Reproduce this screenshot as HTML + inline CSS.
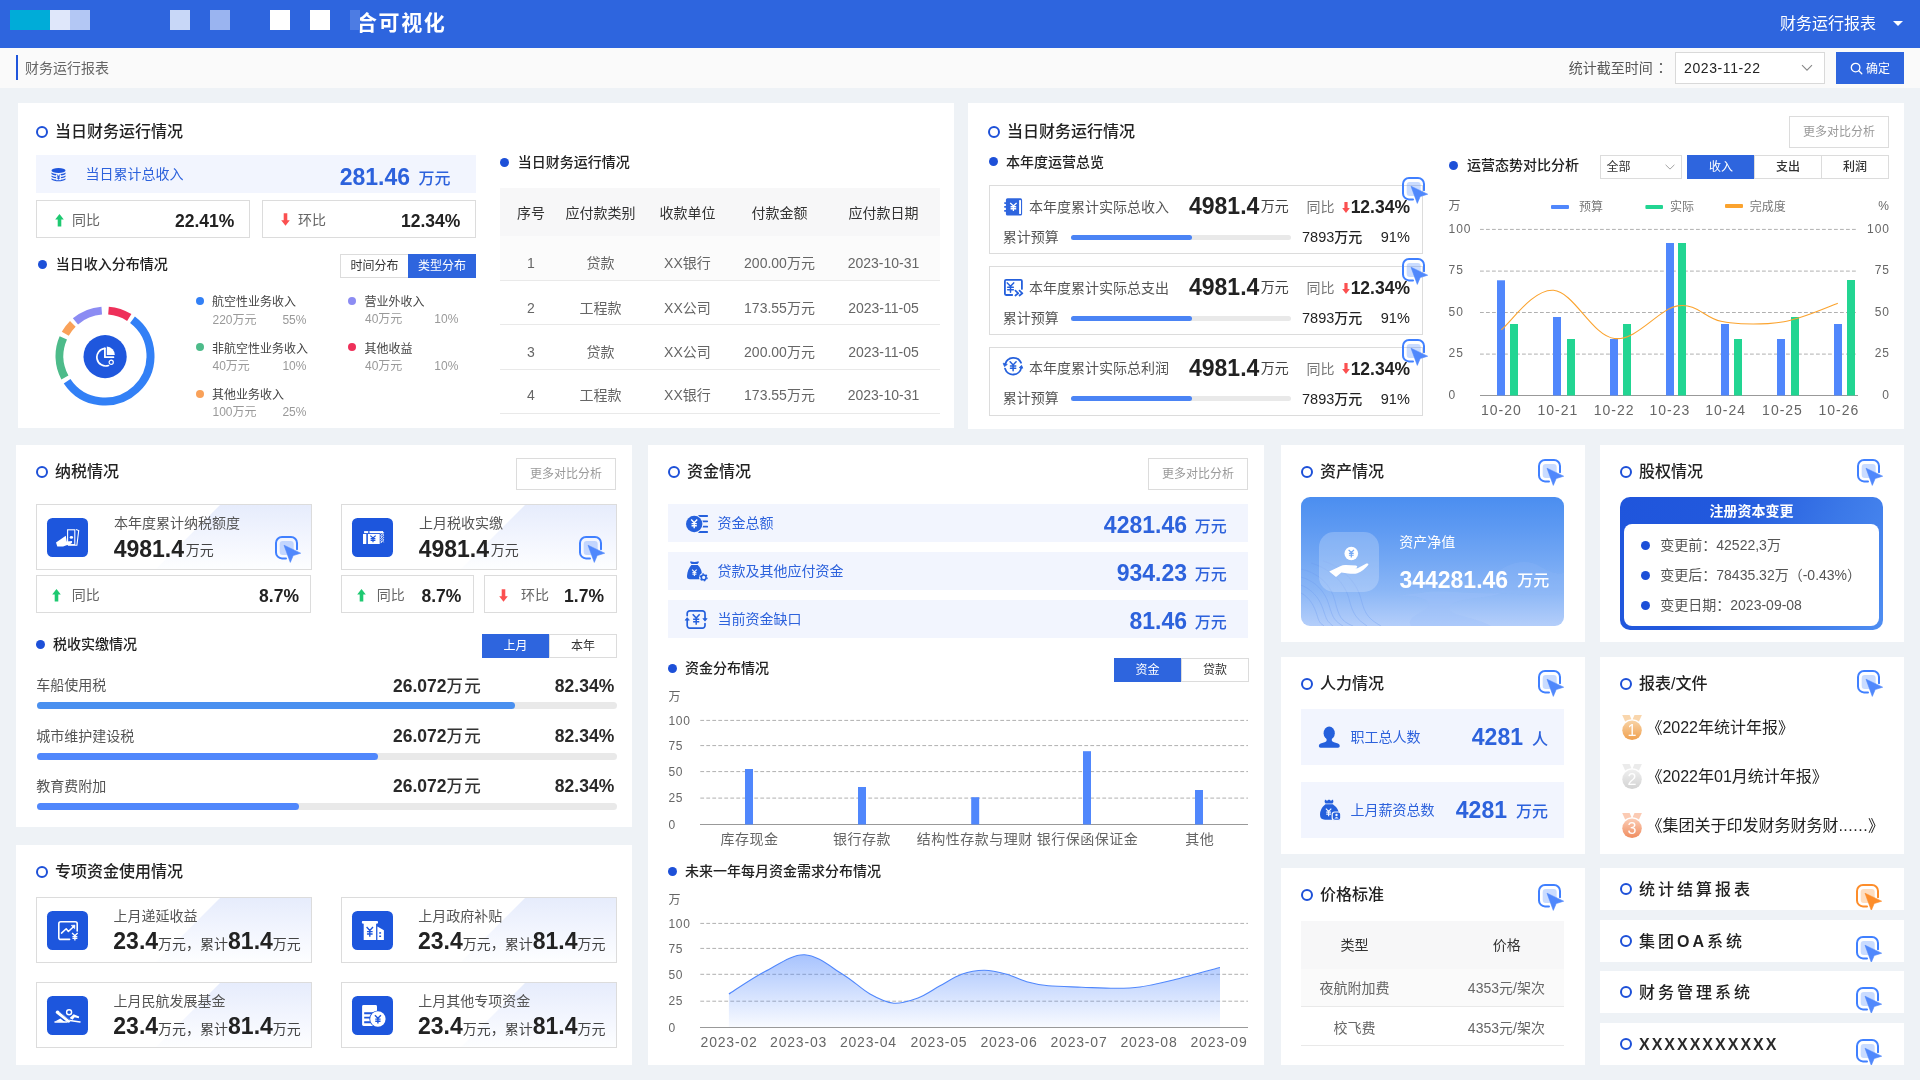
<!DOCTYPE html>
<html lang="zh-CN">
<head>
<meta charset="utf-8">
<title>财务运行报表</title>
<style>
*{box-sizing:border-box;margin:0;padding:0}
html,body{width:1920px;height:1080px;overflow:hidden}
body{background:#eef2f6;font-family:"Liberation Sans","Noto Sans CJK SC",sans-serif;font-size:14px;color:#333;position:relative}
.abs,.p,.t,.n,.box,.band,.dot,.ring,.btn,.seg,.more{position:absolute}
.p{background:#fff;overflow:hidden}
#hd,#sb,.p{will-change:transform}
.t{white-space:nowrap;line-height:20px;height:20px}
.n{white-space:nowrap;font-weight:bold;color:#222;line-height:20px;height:20px}
.ring{width:12px;height:12px;border:2.2px solid #1d50d8;border-radius:50%}
.ttl{font-size:16px;font-weight:500;color:#222;line-height:24px;height:24px}
.dot{width:9px;height:9px;border-radius:50%;background:#1d50d8}
.sub{font-size:14px;font-weight:500;color:#222}
.box{border:1px solid #dcdcdc;background:#fff}
.band{background:#f2f5fe}
.blue{color:#2d62dc}
.g6{color:#666}
.g9{color:#999}
.more{border:1px solid #dcdcdc;color:#999;font-size:12px;text-align:center;background:#fff}
.seg{font-size:12px;text-align:center;border:1px solid #dcdcdc;color:#333;background:#fff}
.seg.on{background:#2e65de;border-color:#2e65de;color:#fff}
.nn{font-size:23px;font-weight:bold;color:#222}
.r{text-align:right}
.c{text-align:center}
svg{position:absolute;overflow:visible}
</style>
</head>
<body>
<!-- header -->
<div class="abs" id="hd" style="left:0;top:0;width:1920px;height:48px;background:#2e65de">
  <div class="abs" style="left:10px;top:10px;width:40px;height:20px;background:#00acd8"></div>
  <div class="abs" style="left:50px;top:10px;width:20px;height:20px;background:#dfe7fa"></div>
  <div class="abs" style="left:70px;top:10px;width:20px;height:20px;background:#b3c7f4"></div>
  <div class="abs" style="left:170px;top:10px;width:20px;height:20px;background:#c8d7f7"></div>
  <div class="abs" style="left:210px;top:10px;width:20px;height:20px;background:#9ab4f0"></div>
  <div class="abs" style="left:270px;top:10px;width:20px;height:20px;background:#fff"></div>
  <div class="abs" style="left:310px;top:10px;width:20px;height:20px;background:#fff"></div>
  <div class="t" style="left:356px;top:10px;font-size:21px;font-weight:bold;color:#fff;line-height:26px;height:26px;letter-spacing:1.6px">合可视化</div>
  <div class="abs" style="left:350px;top:10px;width:10px;height:20px;background:#4d7ce3"></div>
  <div class="t" style="left:1780px;top:13px;font-size:16px;color:#fff;line-height:22px;height:22px">财务运行报表</div>
  <div class="abs" style="left:1893px;top:21px;width:0;height:0;border-left:5px solid transparent;border-right:5px solid transparent;border-top:5px solid #fff"></div>
</div>
<!-- sub bar -->
<div class="abs" id="sb" style="left:0;top:48px;width:1920px;height:40px;background:#fafafa">
  <div class="abs" style="left:16px;top:7px;width:2px;height:25px;background:#1f55dc"></div>
  <div class="t g6" style="left:25px;top:10px;font-size:14px;color:#666">财务运行报表</div>
  <div class="t" style="left:1568.8px;top:10px;font-size:14px;color:#555">统计截至时间<span style="position:relative;left:4.6px;top:-1px">：</span></div>
  <div class="box" style="left:1675px;top:4px;width:150px;height:32px;border-color:#d9d9d9"></div>
  <div class="t" style="left:1684px;top:10px;font-size:14px;color:#222;letter-spacing:0.6px">2023-11-22</div>
  <svg style="left:1801px;top:16px" width="12" height="8" viewBox="0 0 12 8"><path d="M1 1.2 L6 6.2 L11 1.2" fill="none" stroke="#888" stroke-width="1.1"/></svg>
  <div class="abs" style="left:1836px;top:4px;width:68px;height:32px;background:#2e65de"></div>
  <svg style="left:1850px;top:14px" width="13" height="13" viewBox="0 0 13 13"><circle cx="5.6" cy="5.6" r="4.3" fill="none" stroke="#fff" stroke-width="1.3"/><path d="M8.8 8.8 L11.8 11.8" stroke="#fff" stroke-width="1.3" stroke-linecap="round"/></svg>
  <div class="t" style="left:1866px;top:10.5px;font-size:12px;color:#fff">确定</div>
</div>

<!-- PANEL A -->
<div class="p" id="pA" style="left:18px;top:103px;width:936px;height:325px">
  <div class="ring" style="left:18px;top:23px"></div>
  <div class="t ttl" style="left:37px;top:17px">当日财务运行情况</div>
  <div class="band" style="left:18px;top:52px;width:440px;height:37.5px"></div>
  <svg style="left:32.5px;top:64.5px" width="15" height="14" viewBox="0 0 15 14"><ellipse cx="7.5" cy="2.6" rx="7" ry="2.5" fill="#1f55dc"/><path d="M0.5 4.6 C3 6.6 12 6.6 14.5 4.6 V6 C12 8 3 8 0.5 6 Z M0.5 7.4 C3 9.4 12 9.4 14.5 7.4 V8.8 C12 10.8 3 10.8 0.5 8.8 Z M0.5 10.2 C3 12.2 12 12.2 14.5 10.2 V11.4 C12 13.8 3 13.8 0.5 11.4 Z" fill="#1f55dc"/><rect x="5" y="5.8" width="5" height="6.4" fill="#f2f5fe"/><path d="M5.7 6.2 L7.5 8.4 L9.3 6.2 M7.5 8.4 V11.6 M5.9 8.8 H9.1 M5.9 10.2 H9.1" stroke="#1f55dc" stroke-width="0.9" fill="none"/></svg>
  <div class="t blue" style="left:67.4px;top:61px">当日累计总收入</div>
  <div class="n blue r" style="right:544px;top:60px;font-size:23px;line-height:28px;height:28px;color:#2d62dc">281.46</div>
  <div class="t blue" style="left:400.5px;top:65px;font-size:16px;font-weight:500;line-height:22px;height:22px">万元</div>
  <div class="box" style="left:18px;top:97px;width:214px;height:38px"></div>
  <div class="box" style="left:244px;top:97px;width:214px;height:38px"></div>
  <svg style="left:37px;top:110.5px" width="9" height="13" viewBox="0 0 9 13"><path d="M4.5 0 L8.8 5.6 H6.3 V12.6 H2.7 V5.6 H0.2 Z" fill="#1ec971"/></svg>
  <div class="t g6" style="left:54px;top:106.5px">同比</div>
  <div class="n r" style="right:719.6px;top:107.9px;font-size:17.5px">22.41%</div>
  <svg style="left:263px;top:110px" width="9" height="13" viewBox="0 0 9 13"><path d="M4.5 12.8 L8.8 7.2 H6.3 V0.2 H2.7 V7.2 H0.2 Z" fill="#fb5050"/></svg>
  <div class="t g6" style="left:280px;top:106.5px">环比</div>
  <div class="n r" style="right:493.6px;top:107.9px;font-size:17.5px">12.34%</div>
  <div class="dot" style="left:19.5px;top:156.5px"></div>
  <div class="t sub" style="left:37.7px;top:151px">当日收入分布情况</div>
  <div class="seg" style="left:322px;top:151px;width:69px;height:24px;line-height:23.6px">时间分布</div>
  <div class="seg on" style="left:390px;top:151px;width:68px;height:24px;line-height:23.6px">类型分布</div>
  <svg id="donut" style="left:37.25px;top:202.75px" width="100" height="100" viewBox="-50 -50 100 100"><path d="M3.49 -45.37 A45.5 45.5 0 0 1 24.25 -38.50" fill="none" stroke="#ee305a" stroke-width="8"/><path d="M27.51 -36.24 A45.5 45.5 0 1 1 -37.90 25.18" fill="none" stroke="#3280f6" stroke-width="8"/><path d="M-40.10 21.50 A45.5 45.5 0 0 1 -41.69 -18.22" fill="none" stroke="#4dbb8a" stroke-width="8"/><path d="M-39.72 -22.20 A45.5 45.5 0 0 1 -32.17 -32.17" fill="none" stroke="#f9a159" stroke-width="8"/><path d="M-29.55 -34.60 A45.5 45.5 0 0 1 -3.25 -45.38" fill="none" stroke="#8c8cf3" stroke-width="8"/><circle cx="0.1" cy="0.6" r="21.6" fill="#1f57dd"/><g transform="translate(0.1,0.6)"><path d="M-0.2 -8.2 A8.8 8.8 0 1 0 3.4 8.9" fill="none" stroke="#fff" stroke-width="1.7" stroke-linecap="round"/><path d="M-0.2 -8.2 V0.6 H8.3" fill="none" stroke="#fff" stroke-width="1.8" stroke-linecap="round" stroke-linejoin="round"/><path d="M1.7 -1.5 V-10 A8.2 8.2 0 0 1 9.7 -1.5 Z" fill="#fff"/><circle cx="6.1" cy="5.7" r="2.1" fill="#1f57dd" stroke="#fff" stroke-width="1.2"/></g></svg>
  <div class="abs" style="left:178px;top:193.9px;width:8px;height:8px;border-radius:50%;background:#3280f6"></div>
  <div class="t" style="left:194px;top:189.4px;font-size:12px;color:#444">航空性业务收入</div>
  <div class="t g9" style="left:194.5px;top:206.7px;font-size:12px">220万元</div>
  <div class="t g9 r" style="right:647.6px;top:206.7px;font-size:12px">55%</div>
  <div class="abs" style="left:178px;top:240.0px;width:8px;height:8px;border-radius:50%;background:#4dbb8a"></div>
  <div class="t" style="left:194px;top:235.5px;font-size:12px;color:#444">非航空性业务收入</div>
  <div class="t g9" style="left:194.5px;top:253px;font-size:12px">40万元</div>
  <div class="t g9 r" style="right:647.6px;top:253px;font-size:12px">10%</div>
  <div class="abs" style="left:178px;top:286.5px;width:8px;height:8px;border-radius:50%;background:#f9a159"></div>
  <div class="t" style="left:194px;top:282px;font-size:12px;color:#444">其他业务收入</div>
  <div class="t g9" style="left:194.5px;top:298.6px;font-size:12px">100万元</div>
  <div class="t g9 r" style="right:647.6px;top:298.6px;font-size:12px">25%</div>
  <div class="abs" style="left:330px;top:193.6px;width:8px;height:8px;border-radius:50%;background:#8c8cf3"></div>
  <div class="t" style="left:346.5px;top:189.1px;font-size:12px;color:#444">营业外收入</div>
  <div class="t g9" style="left:347.0px;top:206px;font-size:12px">40万元</div>
  <div class="t g9 r" style="right:495.7px;top:206px;font-size:12px">10%</div>
  <div class="abs" style="left:330px;top:240.0px;width:8px;height:8px;border-radius:50%;background:#ee305a"></div>
  <div class="t" style="left:346.5px;top:235.5px;font-size:12px;color:#444">其他收益</div>
  <div class="t g9" style="left:347.0px;top:253px;font-size:12px">40万元</div>
  <div class="t g9 r" style="right:495.7px;top:253px;font-size:12px">10%</div>
  <div class="dot" style="left:481.5px;top:54.5px"></div>
  <div class="t sub" style="left:499.7px;top:49px">当日财务运行情况</div>
  <div class="abs" style="left:482px;top:85px;width:440px;height:48px;background:#f7f7f8"></div>
  <div class="abs" style="left:482px;top:133px;width:440px;height:44px;background:#fbfbfb"></div>
  <div class="t c" style="left:453px;top:99.5px;width:120px;color:#333">序号</div>
  <div class="t c" style="left:522.4px;top:99.5px;width:120px;color:#333">应付款类别</div>
  <div class="t c" style="left:609.4px;top:99.5px;width:120px;color:#333">收款单位</div>
  <div class="t c" style="left:701.5px;top:99.5px;width:120px;color:#333">付款金额</div>
  <div class="t c" style="left:805.5px;top:99.5px;width:120px;color:#333">应付款日期</div>
  <div class="t c g6" style="left:453px;top:149.75px;width:120px">1</div>
  <div class="t c g6" style="left:522.4px;top:149.75px;width:120px">贷款</div>
  <div class="t c g6" style="left:609.4px;top:149.75px;width:120px">XX银行</div>
  <div class="t c g6" style="left:701.5px;top:149.75px;width:120px">200.00万元</div>
  <div class="t c g6" style="left:805.5px;top:149.75px;width:120px">2023-10-31</div>
  <div class="abs" style="left:482px;top:177px;width:440px;height:1px;background:#e9e9e9"></div>
  <div class="t c g6" style="left:453px;top:194.89999999999998px;width:120px">2</div>
  <div class="t c g6" style="left:522.4px;top:194.89999999999998px;width:120px">工程款</div>
  <div class="t c g6" style="left:609.4px;top:194.89999999999998px;width:120px">XX公司</div>
  <div class="t c g6" style="left:701.5px;top:194.89999999999998px;width:120px">173.55万元</div>
  <div class="t c g6" style="left:805.5px;top:194.89999999999998px;width:120px">2023-11-05</div>
  <div class="abs" style="left:482px;top:221px;width:440px;height:1px;background:#e9e9e9"></div>
  <div class="t c g6" style="left:453px;top:238.7px;width:120px">3</div>
  <div class="t c g6" style="left:522.4px;top:238.7px;width:120px">贷款</div>
  <div class="t c g6" style="left:609.4px;top:238.7px;width:120px">XX公司</div>
  <div class="t c g6" style="left:701.5px;top:238.7px;width:120px">200.00万元</div>
  <div class="t c g6" style="left:805.5px;top:238.7px;width:120px">2023-11-05</div>
  <div class="abs" style="left:482px;top:266px;width:440px;height:1px;background:#e9e9e9"></div>
  <div class="t c g6" style="left:453px;top:282.4px;width:120px">4</div>
  <div class="t c g6" style="left:522.4px;top:282.4px;width:120px">工程款</div>
  <div class="t c g6" style="left:609.4px;top:282.4px;width:120px">XX银行</div>
  <div class="t c g6" style="left:701.5px;top:282.4px;width:120px">173.55万元</div>
  <div class="t c g6" style="left:805.5px;top:282.4px;width:120px">2023-10-31</div>
  <div class="abs" style="left:482px;top:310px;width:440px;height:1px;background:#e9e9e9"></div>
</div>

<!-- PANEL B -->
<div class="p" id="pB" style="left:968px;top:103px;width:936px;height:326px">
  <div class="ring" style="left:20px;top:23px"></div>
  <div class="t ttl" style="left:39px;top:17px">当日财务运行情况</div>
  <div class="dot" style="left:20.5px;top:54.4px"></div>
  <div class="t sub" style="left:38px;top:49px">本年度运营总览</div>
  <div class="box" style="left:21px;top:82px;width:434px;height:69px"></div>
  <svg style="left:30px;top:89.0px" width="32" height="30" viewBox="0 0 32 30"><rect x="7.9" y="6.3" width="16.2" height="17.3" rx="1.6" fill="#2f65de"/><rect x="6" y="10.2" width="3" height="1.7" rx="0.8" fill="#2f65de"/><rect x="6" y="14.1" width="3" height="1.7" rx="0.8" fill="#2f65de"/><rect x="6" y="18" width="3" height="1.7" rx="0.8" fill="#2f65de"/><rect x="21.1" y="8" width="1.9" height="14" rx="0.6" fill="#fff"/><path d="M12.20 11.00 L15.40 13.88 L18.60 11.00 M15.40 13.88 V19.00 M12.58 14.76 H18.22 M12.58 16.76 H18.22" fill="none" stroke="#fff" stroke-width="1.3"/></svg>
  <div class="t" style="left:61px;top:94.1px;color:#555">本年度累计实际总收入</div>
  <div class="n" style="left:221.0px;top:89.2px;font-size:23px;line-height:28px;height:28px">4981.4</div>
  <div class="t" style="left:292.8px;top:93.3px;color:#444">万元</div>
  <div class="t" style="left:338.5px;top:94.3px;color:#777">同比</div>
  <svg style="left:374px;top:98.0px" width="8" height="13" viewBox="0 0 9 13"><path d="M4.5 12.8 L8.8 7.2 H6.3 V0.2 H2.7 V7.2 H0.2 Z" fill="#fb5050"/></svg>
  <div class="n r" style="right:494px;top:94.4px;font-size:17.5px">12.34%</div>
  <div class="t" style="left:34.7px;top:124.0px;color:#555">累计预算</div>
  <div class="abs" style="left:103px;top:131.8px;width:220px;height:5px;border-radius:3px;background:#e9e9e9"></div>
  <div class="abs" style="left:103px;top:131.8px;width:121px;height:5px;border-radius:3px;background:#4b84f5"></div>
  <div class="t" style="left:334px;top:124.2px;font-size:14.5px;color:#222">7893<span style="font-size:14px;font-weight:500">万元</span></div>
  <div class="t r" style="right:494.2px;top:124.2px;font-size:14.5px;color:#222">91%</div>
  <svg class="cur" style="left:433px;top:73.4px" width="28" height="29" viewBox="0 0 28 29"><rect x="5.7" y="5.9" width="14" height="14" rx="3" fill="rgba(64,128,255,0.28)"/><path d="M23 14.2 V8 A6 6 0 0 0 17 2 H8 A6 6 0 0 0 2 8 V17.4 A6 6 0 0 0 8 23.4 H12" fill="none" stroke="#4080ff" stroke-width="2" stroke-linecap="round"/><path d="M10 10.2 L26.7 18.2 L19.2 20.6 L16.3 27.4 Z" fill="#5088fc" stroke="#5088fc" stroke-width="0.6" stroke-linejoin="round"/></svg>
  <div class="box" style="left:21px;top:163px;width:434px;height:69px"></div>
  <svg style="left:30px;top:168.9px" width="32" height="30" viewBox="0 0 32 30"><path d="M23.9 16.9 V9 A1.2 1.2 0 0 0 22.7 7.8 H8.1 A1.2 1.2 0 0 0 6.9 9 V21.8 A1.2 1.2 0 0 0 8.1 23 H14.2" fill="none" stroke="#2560dc" stroke-width="1.8" stroke-linecap="round"/><path d="M9.30 10.90 L12.50 14.28 L15.70 10.90 M12.50 14.28 V20.30 M9.68 15.32 H15.32 M9.68 17.67 H15.32" fill="none" stroke="#2560dc" stroke-width="1.5" stroke-linecap="round"/><path d="M17.4 18.6 L20.3 21.3 L17.4 23.5 M21.5 18.6 L24.4 21.3 L21.5 23.5" fill="none" stroke="#2560dc" stroke-width="1.7" stroke-linecap="round" stroke-linejoin="round"/></svg>
  <div class="t" style="left:61px;top:174.9px;color:#555">本年度累计实际总支出</div>
  <div class="n" style="left:221.0px;top:170.0px;font-size:23px;line-height:28px;height:28px">4981.4</div>
  <div class="t" style="left:292.8px;top:174.1px;color:#444">万元</div>
  <div class="t" style="left:338.5px;top:175.1px;color:#777">同比</div>
  <svg style="left:374px;top:178.8px" width="8" height="13" viewBox="0 0 9 13"><path d="M4.5 12.8 L8.8 7.2 H6.3 V0.2 H2.7 V7.2 H0.2 Z" fill="#fb5050"/></svg>
  <div class="n r" style="right:494px;top:175.2px;font-size:17.5px">12.34%</div>
  <div class="t" style="left:34.7px;top:204.8px;color:#555">累计预算</div>
  <div class="abs" style="left:103px;top:212.6px;width:220px;height:5px;border-radius:3px;background:#e9e9e9"></div>
  <div class="abs" style="left:103px;top:212.6px;width:121px;height:5px;border-radius:3px;background:#4b84f5"></div>
  <div class="t" style="left:334px;top:205.0px;font-size:14.5px;color:#222">7893<span style="font-size:14px;font-weight:500">万元</span></div>
  <div class="t r" style="right:494.2px;top:205.0px;font-size:14.5px;color:#222">91%</div>
  <svg class="cur" style="left:433px;top:154.2px" width="28" height="29" viewBox="0 0 28 29"><rect x="5.7" y="5.9" width="14" height="14" rx="3" fill="rgba(64,128,255,0.28)"/><path d="M23 14.2 V8 A6 6 0 0 0 17 2 H8 A6 6 0 0 0 2 8 V17.4 A6 6 0 0 0 8 23.4 H12" fill="none" stroke="#4080ff" stroke-width="2" stroke-linecap="round"/><path d="M10 10.2 L26.7 18.2 L19.2 20.6 L16.3 27.4 Z" fill="#5088fc" stroke="#5088fc" stroke-width="0.6" stroke-linejoin="round"/></svg>
  <div class="box" style="left:21px;top:244px;width:434px;height:69px"></div>
  <svg style="left:30px;top:249.4px" width="32" height="30" viewBox="0 0 32 30"><path d="M7.4 11.6 A8.4 8.4 0 0 1 23 10.7" fill="none" stroke="#2560dc" stroke-width="1.8" stroke-linecap="round"/><path d="M5.2 11.2 L9.3 12.4 L6.5 14.6 Z" fill="#2560dc" stroke="#2560dc" stroke-width="0.8" stroke-linejoin="round"/><path d="M7 16.6 A8.4 8.4 0 0 0 23.3 15.6" fill="none" stroke="#2560dc" stroke-width="1.8" stroke-linecap="round"/><path d="M24.8 16.2 L21.2 15.6 L23.6 13.4 Z" fill="#2560dc" stroke="#2560dc" stroke-width="0.8" stroke-linejoin="round"/><path d="M12.10 9.70 L15.10 12.94 L18.10 9.70 M15.10 12.94 V18.70 M12.46 13.93 H17.74 M12.46 16.18 H17.74" fill="none" stroke="#2560dc" stroke-width="1.5" stroke-linecap="round"/></svg>
  <div class="t" style="left:61px;top:255.4px;color:#555">本年度累计实际总利润</div>
  <div class="n" style="left:221.0px;top:250.5px;font-size:23px;line-height:28px;height:28px">4981.4</div>
  <div class="t" style="left:292.8px;top:254.6px;color:#444">万元</div>
  <div class="t" style="left:338.5px;top:255.6px;color:#777">同比</div>
  <svg style="left:374px;top:259.3px" width="8" height="13" viewBox="0 0 9 13"><path d="M4.5 12.8 L8.8 7.2 H6.3 V0.2 H2.7 V7.2 H0.2 Z" fill="#fb5050"/></svg>
  <div class="n r" style="right:494px;top:255.7px;font-size:17.5px">12.34%</div>
  <div class="t" style="left:34.7px;top:285.3px;color:#555">累计预算</div>
  <div class="abs" style="left:103px;top:293.1px;width:220px;height:5px;border-radius:3px;background:#e9e9e9"></div>
  <div class="abs" style="left:103px;top:293.1px;width:121px;height:5px;border-radius:3px;background:#4b84f5"></div>
  <div class="t" style="left:334px;top:285.5px;font-size:14.5px;color:#222">7893<span style="font-size:14px;font-weight:500">万元</span></div>
  <div class="t r" style="right:494.2px;top:285.5px;font-size:14.5px;color:#222">91%</div>
  <svg class="cur" style="left:433px;top:234.7px" width="28" height="29" viewBox="0 0 28 29"><rect x="5.7" y="5.9" width="14" height="14" rx="3" fill="rgba(64,128,255,0.28)"/><path d="M23 14.2 V8 A6 6 0 0 0 17 2 H8 A6 6 0 0 0 2 8 V17.4 A6 6 0 0 0 8 23.4 H12" fill="none" stroke="#4080ff" stroke-width="2" stroke-linecap="round"/><path d="M10 10.2 L26.7 18.2 L19.2 20.6 L16.3 27.4 Z" fill="#5088fc" stroke="#5088fc" stroke-width="0.6" stroke-linejoin="round"/></svg>
  <div class="more" style="left:821px;top:13px;width:100px;height:32px;line-height:31.6px">更多对比分析</div>
  <div class="dot" style="left:481.4px;top:57.5px"></div>
  <div class="t sub" style="left:498.9px;top:52.4px">运营态势对比分析</div>
  <div class="box" style="left:632px;top:52px;width:82px;height:24px"></div>
  <div class="t" style="left:638.6px;top:54px;font-size:12px;color:#333">全部</div>
  <svg style="left:696.5px;top:60.6px" width="10" height="6" viewBox="0 0 10 6"><path d="M0.6 0.8 L5 5.1 L9.4 0.8" fill="none" stroke="#999" stroke-width="0.9"/></svg>
  <div class="seg on" style="left:719px;top:52px;width:68px;height:24px;line-height:23.6px">收入</div>
  <div class="seg" style="left:786px;top:52px;width:68px;height:24px;line-height:23.6px;font-weight:500">支出</div>
  <div class="seg" style="left:853px;top:52px;width:68px;height:24px;line-height:23.6px;font-weight:500">利润</div>
  <svg style="left:462px;top:87px" width="474" height="239" viewBox="1430 190 474 239"><path d="M1480 229.4 H1856.5" stroke="#b0b0b0" stroke-width="1" stroke-dasharray="3.8 2.2"/><path d="M1480 271.1 H1856.5" stroke="#b0b0b0" stroke-width="1" stroke-dasharray="3.8 2.2"/><path d="M1480 312.5 H1856.5" stroke="#b0b0b0" stroke-width="1" stroke-dasharray="3.8 2.2"/><path d="M1480 354.1 H1856.5" stroke="#b0b0b0" stroke-width="1" stroke-dasharray="3.8 2.2"/><path d="M1480 395.5 H1858" stroke="#999" stroke-width="1"/><rect x="1497" y="280.3" width="8" height="115.2" fill="#5087fc"/><rect x="1510" y="324" width="8" height="71.5" fill="#22d592"/><rect x="1553" y="317" width="8" height="78.5" fill="#5087fc"/><rect x="1567" y="339" width="8" height="56.5" fill="#22d592"/><rect x="1610" y="339" width="8" height="56.5" fill="#5087fc"/><rect x="1623" y="324" width="8" height="71.5" fill="#22d592"/><rect x="1666" y="243" width="8" height="152.5" fill="#5087fc"/><rect x="1678" y="243" width="8" height="152.5" fill="#22d592"/><rect x="1721" y="324" width="8" height="71.5" fill="#5087fc"/><rect x="1734" y="339" width="8" height="56.5" fill="#22d592"/><rect x="1777" y="339" width="8" height="56.5" fill="#5087fc"/><rect x="1791" y="317" width="8" height="78.5" fill="#22d592"/><rect x="1834" y="324" width="8" height="71.5" fill="#5087fc"/><rect x="1847" y="280" width="8" height="115.5" fill="#22d592"/><path d="M1501.25 329.75 C1510.7 322.6 1533.1 288.7 1553.5 290.3 C1573.9 291.9 1592.1 335.7 1614.4 338.5 C1636.7 341.3 1658.4 309.0 1677.6 305.9 C1696.8 302.8 1704.7 318.1 1721 321.3 C1737.3 324.5 1753.8 324.3 1768 323.6 C1782.2 322.9 1787.4 321.2 1800 317.5 C1812.6 313.8 1831.0 305.9 1837.8 303.3" fill="none" stroke="#fba32e" stroke-width="1.1"/><rect x="1551" y="205" width="18" height="4" rx="1" fill="#5087fc"/><rect x="1645.4" y="205" width="17.6" height="4" rx="1" fill="#22d592"/><rect x="1725" y="204" width="18" height="4" rx="1" fill="#fba32e"/><text x="1448.5" y="210.3" style="font-size:12px;fill:#666">万</text><text x="1889" y="210" text-anchor="end" style="font-size:12px;fill:#666">%</text><text x="1448.5" y="232.7" style="font-size:12px;fill:#666;letter-spacing:1px">100</text><text x="1890" y="232.7" text-anchor="end" style="font-size:12px;fill:#666;letter-spacing:1px">100</text><text x="1448.5" y="274.4" style="font-size:12px;fill:#666;letter-spacing:1px">75</text><text x="1890" y="274.4" text-anchor="end" style="font-size:12px;fill:#666;letter-spacing:1px">75</text><text x="1448.5" y="315.8" style="font-size:12px;fill:#666;letter-spacing:1px">50</text><text x="1890" y="315.8" text-anchor="end" style="font-size:12px;fill:#666;letter-spacing:1px">50</text><text x="1448.5" y="357.4" style="font-size:12px;fill:#666;letter-spacing:1px">25</text><text x="1890" y="357.4" text-anchor="end" style="font-size:12px;fill:#666;letter-spacing:1px">25</text><text x="1448.5" y="398.8" style="font-size:12px;fill:#666;letter-spacing:1px">0</text><text x="1890" y="398.8" text-anchor="end" style="font-size:12px;fill:#666;letter-spacing:1px">0</text><text x="1579" y="210.5" style="font-size:12px;fill:#777">预算</text><text x="1670" y="210.5" style="font-size:12px;fill:#777">实际</text><text x="1749.7" y="210.5" style="font-size:12px;fill:#777">完成度</text><text x="1501.4" y="415.3" text-anchor="middle" style="font-size:14px;fill:#666;letter-spacing:1px">10-20</text><text x="1557.9" y="415.3" text-anchor="middle" style="font-size:14px;fill:#666;letter-spacing:1px">10-21</text><text x="1614.1" y="415.3" text-anchor="middle" style="font-size:14px;fill:#666;letter-spacing:1px">10-22</text><text x="1669.9" y="415.3" text-anchor="middle" style="font-size:14px;fill:#666;letter-spacing:1px">10-23</text><text x="1725.6" y="415.3" text-anchor="middle" style="font-size:14px;fill:#666;letter-spacing:1px">10-24</text><text x="1782.5" y="415.3" text-anchor="middle" style="font-size:14px;fill:#666;letter-spacing:1px">10-25</text><text x="1838.8" y="415.3" text-anchor="middle" style="font-size:14px;fill:#666;letter-spacing:1px">10-26</text></svg>
</div>

<!-- PANEL C -->
<div class="p" id="pC" style="left:16px;top:445px;width:616px;height:382px">
  <div class="ring" style="left:20px;top:21px"></div>
  <div class="t ttl" style="left:39px;top:15px">纳税情况</div>
  <div class="more" style="left:500px;top:13px;width:100px;height:32px;line-height:31.6px">更多对比分析</div>
  <div class="box" style="left:20px;top:59px;width:276px;height:66px;overflow:hidden"><div class="abs" style="left:0;top:0;width:100%;height:100%;background:linear-gradient(180deg,#e6ecfc 0%,#f2f5fe 50%,#fdfeff 100%);clip-path:polygon(183px 0,100% 0,100% 100%,119px 100%)"></div></div>
  <div class="box" style="left:325px;top:59px;width:276px;height:66px;overflow:hidden"><div class="abs" style="left:0;top:0;width:100%;height:100%;background:linear-gradient(180deg,#e6ecfc 0%,#f2f5fe 50%,#fdfeff 100%);clip-path:polygon(183px 0,100% 0,100% 100%,119px 100%)"></div></div>
  <svg style="left:31px;top:73px" width="41" height="39" viewBox="0 0 41 39"><rect x="0" y="0" width="41" height="39" rx="5.5" fill="#1d56dd"/><path d="M9 24.4 L18.8 17.8 L19.7 23.6 L25 23.1 Q25.6 24.6 24.4 25.4 L16.1 28.4 H10.3 Z" fill="#fff"/><rect x="20.6" y="11.8" width="7.2" height="14.8" fill="none" stroke="#fff" stroke-width="1.1"/><path d="M29 11.6 L31.7 12.6 L29.9 27.2 H21" fill="none" stroke="#fff" stroke-width="1.1"/><ellipse cx="24.4" cy="19.4" rx="1.7" ry="1.3" fill="#fff"/></svg>
  <svg style="left:336px;top:73px" width="41" height="39" viewBox="0 0 41 39"><rect x="0" y="0" width="41" height="39" rx="5.5" fill="#1d56dd"/><rect x="12.1" y="13.1" width="18.9" height="2" fill="#fff"/><rect x="16.2" y="13.1" width="1.3" height="2" fill="#1d56dd"/><rect x="11" y="16" width="3.3" height="10" fill="#fff"/><rect x="15.9" y="16" width="11.8" height="10" fill="#fff"/><path d="M28.6 15.5 l1.2 1.2 l-1.2 1.2 l1.2 1.2 l-1.2 1.2 l1.2 1.2 l-1.2 1.2 l1.2 1.2 l-1.2 1.2 M30.6 13.5 l1 1.2 l-1 1.2 l1 1.2 l-1 1.2 l1 1.2 l-1 1.2 l1 1.2 l-1 1.2 l1 1.2" fill="none" stroke="#fff" stroke-width="1"/><path d="M18.30 17.60 L21.00 19.98 L23.70 17.60 M21.00 19.98 V24.20 M18.62 20.70 H23.38 M18.62 22.35 H23.38" fill="none" stroke="#1d56dd" stroke-width="1.2"/></svg>
  <div class="t" style="left:98px;top:68.3px;color:#555">本年度累计纳税额度</div>
  <div class="n" style="left:97.7px;top:90.4px;font-size:23px;line-height:28px;height:28px">4981.4</div>
  <div class="t" style="left:169.8px;top:95.2px;color:#444">万元</div>
  <div class="t" style="left:403px;top:68.3px;color:#555">上月税收实缴</div>
  <div class="n" style="left:402.7px;top:90.4px;font-size:23px;line-height:28px;height:28px">4981.4</div>
  <div class="t" style="left:474.8px;top:95.2px;color:#444">万元</div>
  <svg class="cur" style="left:258.2px;top:90.29999999999995px" width="28" height="29" viewBox="0 0 28 29"><rect x="5.7" y="5.9" width="14" height="14" rx="3" fill="rgba(64,128,255,0.28)"/><path d="M23 14.2 V8 A6 6 0 0 0 17 2 H8 A6 6 0 0 0 2 8 V17.4 A6 6 0 0 0 8 23.4 H12" fill="none" stroke="#4080ff" stroke-width="2" stroke-linecap="round"/><path d="M10 10.2 L26.7 18.2 L19.2 20.6 L16.3 27.4 Z" fill="#5088fc" stroke="#5088fc" stroke-width="0.6" stroke-linejoin="round"/></svg>
  <svg class="cur" style="left:562.3px;top:90.29999999999995px" width="28" height="29" viewBox="0 0 28 29"><rect x="5.7" y="5.9" width="14" height="14" rx="3" fill="rgba(64,128,255,0.28)"/><path d="M23 14.2 V8 A6 6 0 0 0 17 2 H8 A6 6 0 0 0 2 8 V17.4 A6 6 0 0 0 8 23.4 H12" fill="none" stroke="#4080ff" stroke-width="2" stroke-linecap="round"/><path d="M10 10.2 L26.7 18.2 L19.2 20.6 L16.3 27.4 Z" fill="#5088fc" stroke="#5088fc" stroke-width="0.6" stroke-linejoin="round"/></svg>
  <div class="box" style="left:20px;top:130px;width:275px;height:38px"></div>
  <div class="box" style="left:325px;top:130px;width:133px;height:38px"></div>
  <div class="box" style="left:468px;top:130px;width:133px;height:38px"></div>
  <svg style="left:35.6px;top:143.5px" width="9" height="13" viewBox="0 0 9 13"><path d="M4.5 0 L8.8 5.6 H6.3 V12.6 H2.7 V5.6 H0.2 Z" fill="#1ec971"/></svg>
  <div class="t g6" style="left:55.8px;top:139.7px">同比</div>
  <div class="n r" style="right:333px;top:141.0px;font-size:17.5px">8.7%</div>
  <svg style="left:340.6px;top:143.5px" width="9" height="13" viewBox="0 0 9 13"><path d="M4.5 0 L8.8 5.6 H6.3 V12.6 H2.7 V5.6 H0.2 Z" fill="#1ec971"/></svg>
  <div class="t g6" style="left:360.8px;top:139.7px">同比</div>
  <div class="n r" style="right:170.7px;top:141.0px;font-size:17.5px">8.7%</div>
  <svg style="left:483.4px;top:144px" width="9" height="13" viewBox="0 0 9 13"><path d="M4.5 12.8 L8.8 7.2 H6.3 V0.2 H2.7 V7.2 H0.2 Z" fill="#fb5050"/></svg>
  <div class="t g6" style="left:505px;top:139.7px">环比</div>
  <div class="n r" style="right:28px;top:141.0px;font-size:17.5px">1.7%</div>
  <div class="dot" style="left:19.5px;top:194.5px"></div>
  <div class="t sub" style="left:37px;top:189px">税收实缴情况</div>
  <div class="seg on" style="left:466px;top:189px;width:67px;height:24px;line-height:23.6px">上月</div>
  <div class="seg" style="left:533px;top:189px;width:68px;height:24px;line-height:23.6px">本年</div>
  <div class="t" style="left:20.3px;top:230.3px;color:#555">车船使用税</div>
  <div class="n" style="left:377px;top:230.6px;font-size:17.5px;color:#2a2a2a">26.072<span style="font-size:16.5px;font-weight:500;letter-spacing:1.2px;color:#333">万元</span></div>
  <div class="n r" style="right:17.8px;top:230.6px;font-size:17.5px;color:#2a2a2a">82.34%</div>
  <div class="abs" style="left:21px;top:257.0px;width:580px;height:7px;border-radius:4px;background:#e9e9e9"></div>
  <div class="abs" style="left:21px;top:257.0px;width:478px;height:7px;border-radius:4px;background:#4a90f0"></div>
  <div class="t" style="left:20.3px;top:281.4px;color:#555">城市维护建设税</div>
  <div class="n" style="left:377px;top:280.7px;font-size:17.5px;color:#2a2a2a">26.072<span style="font-size:16.5px;font-weight:500;letter-spacing:1.2px;color:#333">万元</span></div>
  <div class="n r" style="right:17.8px;top:280.7px;font-size:17.5px;color:#2a2a2a">82.34%</div>
  <div class="abs" style="left:21px;top:308.1px;width:580px;height:7px;border-radius:4px;background:#e9e9e9"></div>
  <div class="abs" style="left:21px;top:308.1px;width:341px;height:7px;border-radius:4px;background:#5087fc"></div>
  <div class="t" style="left:20.3px;top:331.3px;color:#555">教育费附加</div>
  <div class="n" style="left:377px;top:331.2px;font-size:17.5px;color:#2a2a2a">26.072<span style="font-size:16.5px;font-weight:500;letter-spacing:1.2px;color:#333">万元</span></div>
  <div class="n r" style="right:17.8px;top:331.2px;font-size:17.5px;color:#2a2a2a">82.34%</div>
  <div class="abs" style="left:21px;top:358.0px;width:580px;height:7px;border-radius:4px;background:#e9e9e9"></div>
  <div class="abs" style="left:21px;top:358.0px;width:262px;height:7px;border-radius:4px;background:#5087fc"></div>
</div>

<!-- PANEL D -->
<div class="p" id="pD" style="left:648px;top:445px;width:616px;height:620px">
  <div class="ring" style="left:20px;top:21px"></div>
  <div class="t ttl" style="left:39px;top:15px">资金情况</div>
  <div class="more" style="left:500px;top:13px;width:100px;height:32px;line-height:31.6px">更多对比分析</div>
  <div class="band" style="left:20px;top:59px;width:580px;height:38px"></div>
  <div class="t blue" style="left:69.4px;top:68.3px">资金总额</div>
  <div class="n r" style="right:77px;top:66.4px;font-size:23px;line-height:28px;height:28px;color:#2d62dc">4281.46</div>
  <div class="t blue" style="left:546.8px;top:71.2px;font-size:16px;font-weight:500;line-height:22px;height:22px">万元</div>
  <div class="band" style="left:20px;top:107px;width:580px;height:38px"></div>
  <div class="t blue" style="left:69.4px;top:116.3px">贷款及其他应付资金</div>
  <div class="n r" style="right:77px;top:114.4px;font-size:23px;line-height:28px;height:28px;color:#2d62dc">934.23</div>
  <div class="t blue" style="left:546.8px;top:119.2px;font-size:16px;font-weight:500;line-height:22px;height:22px">万元</div>
  <div class="band" style="left:20px;top:155px;width:580px;height:38px"></div>
  <div class="t blue" style="left:69.4px;top:164.3px">当前资金缺口</div>
  <div class="n r" style="right:77px;top:162.4px;font-size:23px;line-height:28px;height:28px;color:#2d62dc">81.46</div>
  <div class="t blue" style="left:546.8px;top:167.2px;font-size:16px;font-weight:500;line-height:22px;height:22px">万元</div>
  <svg style="left:32px;top:61px" width="36" height="130" viewBox="680 506 36 130"><path d="M699 516 H707.2 M699 521.3 H707.2 M699 526.7 H707.2 M699 532 H707.2" stroke="#2560dc" stroke-width="1.8" stroke-linecap="round"/><circle cx="694.2" cy="524" r="9.2" fill="#f2f5fe"/><circle cx="694.2" cy="524" r="8.2" fill="#2560dc"/><path d="M691.20 519.60 L694.20 522.70 L697.20 519.60 M694.20 522.70 V528.20 M691.56 523.64 H696.84 M691.56 525.79 H696.84" fill="none" stroke="#fff" stroke-width="1.4"/><path d="M690.4 561.2 Q694.5 562.6 698.6 561.2 Q699.4 562.8 697.4 564 H691.6 Q689.6 562.8 690.4 561.2 Z" fill="#2560dc"/><path d="M691.4 565 H697.8 Q702 569 702 575.5 Q702 579.2 699 579.2 H690 Q686.8 579.2 687 576 Q687.6 569 691.4 565 Z" fill="#2560dc"/><path d="M692.10 569.60 L694.40 571.90 L696.70 569.60 M694.40 571.90 V576.00 M692.38 572.61 H696.42 M692.38 574.21 H696.42" fill="none" stroke="#f2f5fe" stroke-width="1.1"/><circle cx="703.7" cy="577.4" r="4.6" fill="#f2f5fe"/><circle cx="703.7" cy="577.4" r="2.4" fill="none" stroke="#2560dc" stroke-width="1.6"/><circle cx="703.7" cy="577.4" r="3.4" fill="none" stroke="#2560dc" stroke-width="1.4" stroke-dasharray="1.5 2.06"/><path d="M687.2 615.6 V613.4 A2.6 2.6 0 0 1 689.8 610.8 H702.4 A2.6 2.6 0 0 1 705 613.4 V619.6" fill="none" stroke="#2560dc" stroke-width="1.7" stroke-linecap="round"/><path d="M705 623.6 V625.6 A2.6 2.6 0 0 1 702.4 628.2 H689.8 A2.6 2.6 0 0 1 687.2 625.6 V619" fill="none" stroke="#2560dc" stroke-width="1.7" stroke-linecap="round"/><path d="M702.8 618.6 L705 621.2 L707.2 618.6 Z M685 620.2 L687.2 617.6 L689.4 620.2 Z" fill="#2560dc" stroke="#2560dc" stroke-width="0.6" stroke-linejoin="round"/><path d="M692.70 614.20 L696.20 618.02 L699.70 614.20 M696.20 618.02 V624.80 M693.12 619.18 H699.28 M693.12 621.83 H699.28" fill="none" stroke="#2560dc" stroke-width="1.5"/></svg>
  <div class="dot" style="left:19.6px;top:218.7px"></div>
  <div class="t sub" style="left:37px;top:213.3px">资金分布情况</div>
  <div class="seg on" style="left:466px;top:213px;width:67px;height:24px;line-height:23.6px">资金</div>
  <div class="seg" style="left:533px;top:213px;width:68px;height:24px;line-height:23.6px">贷款</div>
  <div class="dot" style="left:19.6px;top:421.6px"></div>
  <div class="t sub" style="left:37px;top:416.3px">未来一年每月资金需求分布情况</div>
  <svg style="left:12px;top:241px" width="600" height="376" viewBox="660 686 600 376"><defs><linearGradient id="ag" x1="0" y1="0" x2="0" y2="1"><stop offset="0" stop-color="#5087fc" stop-opacity="0.5"/><stop offset="1" stop-color="#5087fc" stop-opacity="0.04"/></linearGradient></defs><path d="M700.3 720.4 H1248" stroke="#b0b0b0" stroke-width="1" stroke-dasharray="3.8 2.2"/><path d="M700.3 745.6 H1248" stroke="#b0b0b0" stroke-width="1" stroke-dasharray="3.8 2.2"/><path d="M700.3 771.6 H1248" stroke="#b0b0b0" stroke-width="1" stroke-dasharray="3.8 2.2"/><path d="M700.3 798.1 H1248" stroke="#b0b0b0" stroke-width="1" stroke-dasharray="3.8 2.2"/><path d="M700 824.5 H1248" stroke="#999" stroke-width="1"/><text x="668.4" y="701.2" style="font-size:12px;fill:#666">万</text><text x="668.4" y="724.6" style="font-size:12px;fill:#666;letter-spacing:0.8px">100</text><text x="668.4" y="749.8" style="font-size:12px;fill:#666;letter-spacing:0.8px">75</text><text x="668.4" y="775.8" style="font-size:12px;fill:#666;letter-spacing:0.8px">50</text><text x="668.4" y="802.3" style="font-size:12px;fill:#666;letter-spacing:0.8px">25</text><text x="668.4" y="828.7" style="font-size:12px;fill:#666;letter-spacing:0.8px">0</text><rect x="745" y="769" width="8" height="55.5" fill="#5087fc"/><rect x="858" y="787" width="8" height="37.5" fill="#5087fc"/><rect x="971.2" y="797.2" width="8" height="27.3" fill="#5087fc"/><rect x="1083" y="751.2" width="8" height="73.3" fill="#5087fc"/><rect x="1195" y="790" width="8" height="34.5" fill="#5087fc"/><text x="749.5" y="843.8" text-anchor="middle" style="font-size:14px;fill:#666;letter-spacing:0.5px">库存现金</text><text x="862.0" y="843.8" text-anchor="middle" style="font-size:14px;fill:#666;letter-spacing:0.5px">银行存款</text><text x="974.8" y="843.8" text-anchor="middle" style="font-size:14px;fill:#666;letter-spacing:0.5px">结构性存款与理财</text><text x="1087.6" y="843.8" text-anchor="middle" style="font-size:14px;fill:#666;letter-spacing:0.5px">银行保函保证金</text><text x="1199.7" y="843.8" text-anchor="middle" style="font-size:14px;fill:#666;letter-spacing:0.5px">其他</text><path d="M700.3 923.4 H1248" stroke="#b0b0b0" stroke-width="1" stroke-dasharray="3.8 2.2"/><path d="M700.3 948.4 H1248" stroke="#b0b0b0" stroke-width="1" stroke-dasharray="3.8 2.2"/><path d="M700.3 974.3 H1248" stroke="#b0b0b0" stroke-width="1" stroke-dasharray="3.8 2.2"/><path d="M700.3 1001.2 H1248" stroke="#b0b0b0" stroke-width="1" stroke-dasharray="3.8 2.2"/><text x="668.4" y="904.2" style="font-size:12px;fill:#666">万</text><text x="668.4" y="927.6" style="font-size:12px;fill:#666;letter-spacing:0.8px">100</text><text x="668.4" y="952.6" style="font-size:12px;fill:#666;letter-spacing:0.8px">75</text><text x="668.4" y="978.5" style="font-size:12px;fill:#666;letter-spacing:0.8px">50</text><text x="668.4" y="1005.4" style="font-size:12px;fill:#666;letter-spacing:0.8px">25</text><text x="668.4" y="1031.7" style="font-size:12px;fill:#666;letter-spacing:0.8px">0</text><path d="M728.9 994 C734.9 990.2 752.4 978.0 765 971.5 C777.6 965.0 791.7 954.2 804.6 954.7 C817.5 955.2 831.7 967.7 842.6 974.2 C853.5 980.8 861.5 989.2 870 994 C878.5 998.8 885.8 1002.5 893.8 1003.2 C901.8 1003.9 910.3 1000.9 918 998 C925.7 995.1 932.7 989.8 940 985.8 C947.3 981.8 954.3 976.8 961.7 974.2 C969.1 971.6 976.7 970.3 984.2 970.3 C991.7 970.3 999.6 972.3 1006.7 974.2 C1013.8 976.1 1019.8 979.8 1026.7 981.7 C1033.6 983.6 1039.1 984.9 1048.3 985.8 C1057.5 986.7 1070.6 986.8 1081.7 987.2 C1092.8 987.6 1105.3 988.3 1115 988.3 C1124.7 988.3 1130.3 988.4 1140 987 C1149.7 985.6 1160.0 983.2 1173.3 980 C1186.6 976.8 1212.2 969.6 1220 967.5 V1027 H728.9 Z" fill="url(#ag)"/><path d="M728.9 994 C734.9 990.2 752.4 978.0 765 971.5 C777.6 965.0 791.7 954.2 804.6 954.7 C817.5 955.2 831.7 967.7 842.6 974.2 C853.5 980.8 861.5 989.2 870 994 C878.5 998.8 885.8 1002.5 893.8 1003.2 C901.8 1003.9 910.3 1000.9 918 998 C925.7 995.1 932.7 989.8 940 985.8 C947.3 981.8 954.3 976.8 961.7 974.2 C969.1 971.6 976.7 970.3 984.2 970.3 C991.7 970.3 999.6 972.3 1006.7 974.2 C1013.8 976.1 1019.8 979.8 1026.7 981.7 C1033.6 983.6 1039.1 984.9 1048.3 985.8 C1057.5 986.7 1070.6 986.8 1081.7 987.2 C1092.8 987.6 1105.3 988.3 1115 988.3 C1124.7 988.3 1130.3 988.4 1140 987 C1149.7 985.6 1160.0 983.2 1173.3 980 C1186.6 976.8 1212.2 969.6 1220 967.5" fill="none" stroke="#5087fc" stroke-width="1.1"/><path d="M700 1027.5 H1248" stroke="#999" stroke-width="1"/><text x="729.1" y="1047" text-anchor="middle" style="font-size:14px;fill:#666;letter-spacing:0.8px">2023-02</text><text x="798.6" y="1047" text-anchor="middle" style="font-size:14px;fill:#666;letter-spacing:0.8px">2023-03</text><text x="868.4" y="1047" text-anchor="middle" style="font-size:14px;fill:#666;letter-spacing:0.8px">2023-04</text><text x="938.9" y="1047" text-anchor="middle" style="font-size:14px;fill:#666;letter-spacing:0.8px">2023-05</text><text x="1009.0" y="1047" text-anchor="middle" style="font-size:14px;fill:#666;letter-spacing:0.8px">2023-06</text><text x="1079.0" y="1047" text-anchor="middle" style="font-size:14px;fill:#666;letter-spacing:0.8px">2023-07</text><text x="1149.0" y="1047" text-anchor="middle" style="font-size:14px;fill:#666;letter-spacing:0.8px">2023-08</text><text x="1219.0" y="1047" text-anchor="middle" style="font-size:14px;fill:#666;letter-spacing:0.8px">2023-09</text></svg>
</div>

<!-- PANEL E -->
<div class="p" id="pE" style="left:1281px;top:445px;width:304px;height:197px">
  <div class="ring" style="left:20px;top:21px"></div>
  <div class="t ttl" style="left:39px;top:15px">资产情况</div>
  <svg class="cur" style="left:256px;top:12.8px" width="28" height="29" viewBox="0 0 28 29"><rect x="5.7" y="5.9" width="14" height="14" rx="3" fill="rgba(64,128,255,0.28)"/><path d="M23 14.2 V8 A6 6 0 0 0 17 2 H8 A6 6 0 0 0 2 8 V17.4 A6 6 0 0 0 8 23.4 H12" fill="none" stroke="#4080ff" stroke-width="2" stroke-linecap="round"/><path d="M10 10.2 L26.7 18.2 L19.2 20.6 L16.3 27.4 Z" fill="#5088fc" stroke="#5088fc" stroke-width="0.6" stroke-linejoin="round"/></svg>
  <div class="abs" style="left:20px;top:52px;width:263px;height:129px;border-radius:9px;overflow:hidden;background:linear-gradient(180deg,#4b8ef0 0%,#5e9af2 25%,#74a8f4 50%,#8ab6f6 72%,#b4cefa 100%)"><svg style="left:0;top:0" width="263" height="129" viewBox="0 0 263 129"><g fill="none" stroke="#6c9cf0" stroke-opacity="0.35" stroke-width="1"><path d="M0 72 C18 76 30 88 34 104 S40 124 52 129"/><path d="M0 80 C14 84 24 94 28 108 S34 124 42 129"/><path d="M0 88 C10 92 18 100 22 112 S26 124 32 129"/><path d="M0 96 C8 100 13 108 16 118 S20 126 23 129"/><path d="M10 66 C30 72 44 86 48 102 S56 122 66 129"/><path d="M22 64 C42 70 56 86 60 102 S68 122 80 129"/></g><path d="M82 104 C100 94 130 100 128 108 C126 116 104 118 110 129 L190 129 C170 118 140 118 150 108 C158 100 186 102 200 96 C170 98 140 92 120 96 C100 98 90 100 82 104 Z" fill="#9dc0f8" fill-opacity="0.35"/><path d="M190 80 C205 66 225 60 240 70 C250 76 258 78 263 76 V96 C240 100 215 96 190 96 Z" fill="#8fb6f6" fill-opacity="0.25"/></svg></div>
  <div class="abs" style="left:38.2px;top:87.3px;width:60px;height:59.5px;border-radius:15px;background:rgba(255,255,255,0.22)"></div>
  <svg style="left:38px;top:87px" width="60" height="60" viewBox="1319 532 60 60"><circle cx="1351.3" cy="553.5" r="6.8" fill="#fff"/><path d="M1348.60 549.80 L1351.30 552.54 L1354.00 549.80 M1351.30 552.54 V557.40 M1348.92 553.37 H1353.68 M1348.92 555.27 H1353.68" fill="none" stroke="#74a8f4" stroke-width="1.2"/><path d="M1329.2 571.5 L1340.2 566.2 Q1343 564.8 1346 565 L1356 565.6 Q1358 566 1357 567.6 Q1356.4 568.4 1354.6 568.4 L1349 568.6 L1357.6 568.2 L1366.4 563.6 Q1368.6 563 1368.4 564.8 Q1364 570.6 1357.4 573.2 Q1354 574.2 1348 573.4 L1341.4 572.6 L1336 577 Z" fill="#fff"/></svg>
  <div class="t" style="left:118.2px;top:87.3px;color:#fff">资产净值</div>
  <div class="n" style="left:118.4px;top:120.8px;font-size:23px;line-height:28px;height:28px;color:#fff">344281.46</div>
  <div class="t" style="left:236.2px;top:124.8px;font-size:16px;font-weight:500;line-height:22px;height:22px;color:#fff">万元</div>
</div>

<!-- PANEL F -->
<div class="p" id="pF" style="left:1600px;top:445px;width:304px;height:197px">
  <div class="ring" style="left:20px;top:21px"></div>
  <div class="t ttl" style="left:39px;top:15px">股权情况</div>
  <svg class="cur" style="left:256px;top:12.8px" width="28" height="29" viewBox="0 0 28 29"><rect x="5.7" y="5.9" width="14" height="14" rx="3" fill="rgba(64,128,255,0.28)"/><path d="M23 14.2 V8 A6 6 0 0 0 17 2 H8 A6 6 0 0 0 2 8 V17.4 A6 6 0 0 0 8 23.4 H12" fill="none" stroke="#4080ff" stroke-width="2" stroke-linecap="round"/><path d="M10 10.2 L26.7 18.2 L19.2 20.6 L16.3 27.4 Z" fill="#5088fc" stroke="#5088fc" stroke-width="0.6" stroke-linejoin="round"/></svg>
  <div class="abs" style="left:20px;top:52px;width:263px;height:133px;border-radius:10px;background:linear-gradient(115deg,#1f55dc 0%,#2259dd 35%,#3b78e8 70%,#4f8ef2 100%)"></div>
  <div class="abs" style="left:24px;top:78.5px;width:255.3px;height:102.5px;border-radius:8px;background:#fff"></div>
  <div class="t c" style="left:20px;width:263px;top:56.3px;color:#fff;font-weight:bold">注册资本变更</div>
  <div class="dot" style="left:40.5px;top:95.7px"></div>
  <div class="t" style="left:60.3px;top:90.4px;color:#555">变更前：42522,3万</div>
  <div class="dot" style="left:40.5px;top:125.7px"></div>
  <div class="t" style="left:60.3px;top:120.4px;color:#555">变更后：78435.32万（-0.43%）</div>
  <div class="dot" style="left:40.5px;top:155.7px"></div>
  <div class="t" style="left:60.3px;top:150.4px;color:#555">变更日期：2023-09-08</div>
</div>

<!-- PANEL G -->
<div class="p" id="pG" style="left:16px;top:845px;width:616px;height:220px">
  <div class="ring" style="left:20px;top:21px"></div>
  <div class="t ttl" style="left:39px;top:15px">专项资金使用情况</div>
  <div class="box" style="left:20px;top:52px;width:276px;height:66px;overflow:hidden"><div class="abs" style="left:0;top:0;width:100%;height:100%;background:linear-gradient(180deg,#e6ecfc 0%,#f2f5fe 50%,#fdfeff 100%);clip-path:polygon(183px 0,100% 0,100% 100%,119px 100%)"></div></div>
  <svg style="left:31px;top:66px" width="41" height="39" viewBox="0 0 41 39"><rect x="0" y="0" width="41" height="39" rx="5.5" fill="#1d56dd"/><path d="M30.2 19.9 V12.7 A2 2 0 0 0 28.2 10.7 H13.8 A2 2 0 0 0 11.8 12.7 V26.4 A2 2 0 0 0 13.8 28.4 H22.6" fill="none" stroke="#fff" stroke-width="1.6" stroke-linecap="round"/><path d="M14.5 22.1 L19.2 17.8 L21.4 20.5 L27 15.2" fill="none" stroke="#fff" stroke-width="1.5" stroke-linecap="round" stroke-linejoin="round"/><path d="M24.2 14.4 L27.9 14.1 L27.7 17.8 Z" fill="#fff" stroke="#fff" stroke-width="0.6" stroke-linejoin="round"/><path d="M25.10 22.00 L27.90 24.74 L30.70 22.00 M27.90 24.74 V29.60 M25.44 25.57 H30.36 M25.44 27.47 H30.36" fill="none" stroke="#fff" stroke-width="1.3"/></svg>
  <div class="t" style="left:97.5px;top:61.3px;color:#555">上月递延收益</div>
  <div class="t" style="left:97.3px;top:82.2px;line-height:28px;height:28px;color:#444"><span class="nn">23.4</span>万元，累计<span class="nn">81.4</span>万元</div>
  <div class="box" style="left:325px;top:52px;width:276px;height:66px;overflow:hidden"><div class="abs" style="left:0;top:0;width:100%;height:100%;background:linear-gradient(180deg,#e6ecfc 0%,#f2f5fe 50%,#fdfeff 100%);clip-path:polygon(183px 0,100% 0,100% 100%,119px 100%)"></div></div>
  <svg style="left:336px;top:66px" width="41" height="39" viewBox="0 0 41 39"><rect x="0" y="0" width="41" height="39" rx="5.5" fill="#1d56dd"/><path d="M10.6 10.1 H25.2 Q26 10.1 26 11 V12 Q26 12.8 24.1 12.8 V29 H11.7 V12.8 Q9.9 12.8 9.9 12 V11 Q9.9 10.1 10.6 10.1 Z" fill="#fff"/><path d="M14.60 16.10 L17.80 19.56 L21.00 16.10 M17.80 19.56 V25.70 M14.98 20.61 H20.62 M14.98 23.01 H20.62" fill="none" stroke="#1d56dd" stroke-width="1.4"/><path d="M25.4 15.4 L31.9 19.2 V29 H25.4 Z" fill="#fff"/><rect x="27.2" y="21.2" width="1.9" height="1.5" fill="#1d56dd"/><rect x="27.2" y="24.5" width="1.9" height="1.5" fill="#1d56dd"/></svg>
  <div class="t" style="left:402.2px;top:61.3px;color:#555">上月政府补贴</div>
  <div class="t" style="left:402.0px;top:82.2px;line-height:28px;height:28px;color:#444"><span class="nn">23.4</span>万元，累计<span class="nn">81.4</span>万元</div>
  <div class="box" style="left:20px;top:137px;width:276px;height:66px;overflow:hidden"><div class="abs" style="left:0;top:0;width:100%;height:100%;background:linear-gradient(180deg,#e6ecfc 0%,#f2f5fe 50%,#fdfeff 100%);clip-path:polygon(183px 0,100% 0,100% 100%,119px 100%)"></div></div>
  <svg style="left:31px;top:151px" width="41" height="39" viewBox="0 0 41 39"><rect x="0" y="0" width="41" height="39" rx="5.5" fill="#1d56dd"/><path d="M10.4 16.2 L21.6 25" fill="none" stroke="#fff" stroke-width="3.4" stroke-linecap="round"/><path d="M12 15.4 L23 24.6" fill="none" stroke="#1d56dd" stroke-width="0.7"/><circle cx="22.1" cy="16.3" r="2.5" fill="#1d56dd" stroke="#fff" stroke-width="1.4"/><path d="M22.6 21.9 L26.6 18.2 L32.2 20.6 L31.8 22.2 L27.6 21.2 L25.6 23.8 Z" fill="#fff"/><path d="M8 25.6 L13.4 22.6 L18 26.2 Z" fill="#fff"/><path d="M8 25.9 H20 M23 24.6 L33 26" fill="none" stroke="#fff" stroke-width="1.5" stroke-linecap="round"/></svg>
  <div class="t" style="left:97.5px;top:146.3px;color:#555">上月民航发展基金</div>
  <div class="t" style="left:97.3px;top:167.2px;line-height:28px;height:28px;color:#444"><span class="nn">23.4</span>万元，累计<span class="nn">81.4</span>万元</div>
  <div class="box" style="left:325px;top:137px;width:276px;height:66px;overflow:hidden"><div class="abs" style="left:0;top:0;width:100%;height:100%;background:linear-gradient(180deg,#e6ecfc 0%,#f2f5fe 50%,#fdfeff 100%);clip-path:polygon(183px 0,100% 0,100% 100%,119px 100%)"></div></div>
  <svg style="left:336px;top:151px" width="41" height="39" viewBox="0 0 41 39"><rect x="0" y="0" width="41" height="39" rx="5.5" fill="#1d56dd"/><rect x="10.1" y="9" width="14.9" height="20.9" rx="1.4" fill="#fff"/><path d="M12.2 17.2 H21 M12.2 21.6 H19 M12.2 26.2 H20" stroke="#1d56dd" stroke-width="1.9"/><circle cx="25.9" cy="23" r="8.6" fill="#1d56dd"/><circle cx="25.9" cy="23" r="7.7" fill="#fff"/><path d="M22.90 19.20 L25.90 22.22 L28.90 19.20 M25.90 22.22 V27.60 M23.26 23.15 H28.54 M23.26 25.25 H28.54" fill="none" stroke="#1d56dd" stroke-width="1.4"/></svg>
  <div class="t" style="left:402.2px;top:146.3px;color:#555">上月其他专项资金</div>
  <div class="t" style="left:402.0px;top:167.2px;line-height:28px;height:28px;color:#444"><span class="nn">23.4</span>万元，累计<span class="nn">81.4</span>万元</div>
</div>

<!-- PANEL H -->
<div class="p" id="pH" style="left:1281px;top:657px;width:304px;height:197px">
  <div class="ring" style="left:20px;top:21px"></div>
  <div class="t ttl" style="left:39px;top:15px">人力情况</div>
  <svg class="cur" style="left:256px;top:11.9px" width="28" height="29" viewBox="0 0 28 29"><rect x="5.7" y="5.9" width="14" height="14" rx="3" fill="rgba(64,128,255,0.28)"/><path d="M23 14.2 V8 A6 6 0 0 0 17 2 H8 A6 6 0 0 0 2 8 V17.4 A6 6 0 0 0 8 23.4 H12" fill="none" stroke="#4080ff" stroke-width="2" stroke-linecap="round"/><path d="M10 10.2 L26.7 18.2 L19.2 20.6 L16.3 27.4 Z" fill="#5088fc" stroke="#5088fc" stroke-width="0.6" stroke-linejoin="round"/></svg>
  <div class="band" style="left:20px;top:52px;width:263px;height:55.7px"></div>
  <div class="band" style="left:20px;top:125px;width:263px;height:55.8px"></div>
  <svg style="left:35px;top:67px" width="28" height="100" viewBox="1316 724 28 100"><ellipse cx="1329.2" cy="733.2" rx="5.6" ry="6.6" fill="#2560dc"/><path d="M1326.6 738 H1331.8 V740.6 Q1332 741.6 1334 742.2 L1338 743.6 Q1339.8 744.4 1339.8 746 Q1339.8 747.8 1338 747.8 H1320.6 Q1318.8 747.8 1318.8 746 Q1318.8 744.4 1320.6 743.6 L1324.6 742.2 Q1326.6 741.6 1326.6 740.6 Z" fill="#2560dc"/><path d="M1325 799.4 L1327 800.8 L1329 799.4 L1331 800.8 L1333 799.4 Q1334 801.6 1332.4 803.4 H1325.6 Q1324 801.6 1325 799.4 Z" fill="#2560dc"/><path d="M1325.4 804.2 H1332.8 Q1339 808.6 1339 814.6 Q1339 819.8 1334 819.8 H1325 Q1320 819.8 1320 814.6 Q1320 808.6 1325.4 804.2 Z" fill="#2560dc"/><path d="M1325.90 808.60 L1328.60 811.34 L1331.30 808.60 M1328.60 811.34 V816.20 M1326.22 812.17 H1330.98 M1326.22 814.07 H1330.98" fill="none" stroke="#f2f5fe" stroke-width="1.2"/><rect x="1332.2" y="812" width="8.6" height="8.4" rx="2.6" fill="#2560dc" stroke="#f2f5fe" stroke-width="1.2"/><circle cx="1336.5" cy="815" r="1.2" fill="#f2f5fe"/><path d="M1334.3 818.6 Q1336.5 815.4 1338.7 818.6 Z" fill="#f2f5fe"/></svg>
  <div class="t blue" style="left:69.6px;top:70px">职工总人数</div>
  <div class="n r" style="right:62px;top:66px;font-size:23px;line-height:28px;height:28px;color:#2d62dc">4281</div>
  <div class="t blue" style="left:251px;top:72.20000000000005px;font-size:16px;font-weight:500;line-height:22px;height:22px">人</div>
  <div class="t blue" style="left:69.6px;top:143px">上月薪资总数</div>
  <div class="n r" style="right:78px;top:139px;font-size:23px;line-height:28px;height:28px;color:#2d62dc">4281</div>
  <div class="t blue" style="left:234.9px;top:144.20000000000005px;font-size:16px;font-weight:500;line-height:22px;height:22px">万元</div>
</div>

<!-- PANEL I -->
<div class="p" id="pI" style="left:1600px;top:657px;width:304px;height:197px">
  <div class="ring" style="left:20px;top:21px"></div>
  <div class="t ttl" style="left:39px;top:15px">报表/文件</div>
  <svg class="cur" style="left:256px;top:11.9px" width="28" height="29" viewBox="0 0 28 29"><rect x="5.7" y="5.9" width="14" height="14" rx="3" fill="rgba(64,128,255,0.28)"/><path d="M23 14.2 V8 A6 6 0 0 0 17 2 H8 A6 6 0 0 0 2 8 V17.4 A6 6 0 0 0 8 23.4 H12" fill="none" stroke="#4080ff" stroke-width="2" stroke-linecap="round"/><path d="M10 10.2 L26.7 18.2 L19.2 20.6 L16.3 27.4 Z" fill="#5088fc" stroke="#5088fc" stroke-width="0.6" stroke-linejoin="round"/></svg>
  <svg style="left:22px;top:58px" width="20" height="26" viewBox="0 0 20 26"><defs><linearGradient id="mg1" x1="0" y1="0" x2="0" y2="1"><stop offset="0" stop-color="#f8d3a6"/><stop offset="1" stop-color="#f0a04e"/></linearGradient></defs><path d="M0.2 0 H7.6 L9.6 4.6 L3.6 7.4 Z M19.9 0 H12.5 L10.5 4.6 L16.5 7.4 Z" fill="#f9d6ad"/><circle cx="10.05" cy="15.3" r="11" fill="#fff"/><circle cx="10.05" cy="15.3" r="9.75" fill="url(#mg1)"/><text x="10" y="21.1" text-anchor="middle" style="font-size:16px;fill:#fff;fill-opacity:0.96;font-family:'Liberation Sans',sans-serif">1</text></svg>
  <svg style="left:22px;top:106.8px" width="20" height="26" viewBox="0 0 20 26"><defs><linearGradient id="mg2" x1="0" y1="0" x2="0" y2="1"><stop offset="0" stop-color="#efefef"/><stop offset="1" stop-color="#d2d2d2"/></linearGradient></defs><path d="M0.2 0 H7.6 L9.6 4.6 L3.6 7.4 Z M19.9 0 H12.5 L10.5 4.6 L16.5 7.4 Z" fill="#ebebeb"/><circle cx="10.05" cy="15.3" r="11" fill="#fff"/><circle cx="10.05" cy="15.3" r="9.75" fill="url(#mg2)"/><text x="10" y="21.1" text-anchor="middle" style="font-size:16px;fill:#fff;fill-opacity:0.96;font-family:'Liberation Sans',sans-serif">2</text></svg>
  <svg style="left:22px;top:156px" width="20" height="26" viewBox="0 0 20 26"><defs><linearGradient id="mg3" x1="0" y1="0" x2="0" y2="1"><stop offset="0" stop-color="#fbcdb6"/><stop offset="1" stop-color="#f08c5e"/></linearGradient></defs><path d="M0.2 0 H7.6 L9.6 4.6 L3.6 7.4 Z M19.9 0 H12.5 L10.5 4.6 L16.5 7.4 Z" fill="#fbcbb4"/><circle cx="10.05" cy="15.3" r="11" fill="#fff"/><circle cx="10.05" cy="15.3" r="9.75" fill="url(#mg3)"/><text x="10" y="21.1" text-anchor="middle" style="font-size:16px;fill:#fff;fill-opacity:0.96;font-family:'Liberation Sans',sans-serif">3</text></svg>
  <div class="t" style="left:46.4px;top:59.0px;font-size:16px;line-height:24px;height:24px;color:#222">《2022年统计年报》</div>
  <div class="t" style="left:46.4px;top:108.0px;font-size:16px;line-height:24px;height:24px;color:#222">《2022年01月统计年报》</div>
  <div class="t" style="left:46.4px;top:157.2px;font-size:16px;line-height:24px;height:24px;color:#222">《集团关于印发财务财务财<span style="letter-spacing:0.5px">......</span>》</div>
</div>

<!-- PANEL J -->
<div class="p" id="pJ" style="left:1281px;top:868px;width:304px;height:197px">
  <div class="ring" style="left:20px;top:21px"></div>
  <div class="t ttl" style="left:39px;top:15px">价格标准</div>
  <svg class="cur" style="left:256px;top:14.8px" width="28" height="29" viewBox="0 0 28 29"><rect x="5.7" y="5.9" width="14" height="14" rx="3" fill="rgba(64,128,255,0.28)"/><path d="M23 14.2 V8 A6 6 0 0 0 17 2 H8 A6 6 0 0 0 2 8 V17.4 A6 6 0 0 0 8 23.4 H12" fill="none" stroke="#4080ff" stroke-width="2" stroke-linecap="round"/><path d="M10 10.2 L26.7 18.2 L19.2 20.6 L16.3 27.4 Z" fill="#5088fc" stroke="#5088fc" stroke-width="0.6" stroke-linejoin="round"/></svg>
  <div class="abs" style="left:20px;top:53px;width:263px;height:48px;background:#f7f7f8"></div>
  <div class="abs" style="left:20px;top:101px;width:263px;height:37px;background:#fafafa"></div>
  <div class="abs" style="left:20px;top:138px;width:263px;height:1px;background:#e9e9e9"></div>
  <div class="abs" style="left:20px;top:177px;width:263px;height:1px;background:#e9e9e9"></div>
  <div class="t c" style="left:13.5px;width:120px;top:67.0px;color:#333">类型</div>
  <div class="t c" style="left:165.7px;width:120px;top:67.0px;color:#333">价格</div>
  <div class="t c" style="left:13.5px;width:120px;top:110.3px;color:#666">夜航附加费</div>
  <div class="t c" style="left:165.4px;width:120px;top:110.3px;color:#666">4353元/架次</div>
  <div class="t c" style="left:13.5px;width:120px;top:149.5px;color:#666">校飞费</div>
  <div class="t c" style="left:165.4px;width:120px;top:149.5px;color:#666">4353元/架次</div>
</div>

<!-- PANELS K -->
<div class="p" id="pK1" style="left:1600px;top:868px;width:304px;height:42px">
  <div class="ring" style="left:20px;top:15px"></div>
  <div class="t ttl" style="left:39px;top:10.4px;letter-spacing:3px">统计结算报表</div>
  <svg class="cur" style="left:255px;top:15.2px" width="28" height="29" viewBox="0 0 28 29"><rect x="5.7" y="5.9" width="14" height="14" rx="3" fill="rgba(253,141,42,0.3)"/><path d="M23 14.2 V8 A6 6 0 0 0 17 2 H8 A6 6 0 0 0 2 8 V17.4 A6 6 0 0 0 8 23.4 H12" fill="none" stroke="#fd8d2a" stroke-width="2" stroke-linecap="round"/><path d="M10 10.2 L26.7 18.2 L19.2 20.6 L16.3 27.4 Z" fill="#fd8d2a" stroke="#fd8d2a" stroke-width="0.6" stroke-linejoin="round"/></svg>
</div>
<div class="p" id="pK2" style="left:1600px;top:920px;width:304px;height:42px">
  <div class="ring" style="left:20px;top:15px"></div>
  <div class="t ttl" style="left:39px;top:10.4px;letter-spacing:3px">集团<span style="font-weight:bold">OA</span>系统</div>
  <svg class="cur" style="left:255px;top:15.2px" width="28" height="29" viewBox="0 0 28 29"><rect x="5.7" y="5.9" width="14" height="14" rx="3" fill="rgba(64,128,255,0.28)"/><path d="M23 14.2 V8 A6 6 0 0 0 17 2 H8 A6 6 0 0 0 2 8 V17.4 A6 6 0 0 0 8 23.4 H12" fill="none" stroke="#4080ff" stroke-width="2" stroke-linecap="round"/><path d="M10 10.2 L26.7 18.2 L19.2 20.6 L16.3 27.4 Z" fill="#5088fc" stroke="#5088fc" stroke-width="0.6" stroke-linejoin="round"/></svg>
</div>
<div class="p" id="pK3" style="left:1600px;top:971px;width:304px;height:42px">
  <div class="ring" style="left:20px;top:15px"></div>
  <div class="t ttl" style="left:39px;top:10.4px;letter-spacing:3px">财务管理系统</div>
  <svg class="cur" style="left:255px;top:15.2px" width="28" height="29" viewBox="0 0 28 29"><rect x="5.7" y="5.9" width="14" height="14" rx="3" fill="rgba(64,128,255,0.28)"/><path d="M23 14.2 V8 A6 6 0 0 0 17 2 H8 A6 6 0 0 0 2 8 V17.4 A6 6 0 0 0 8 23.4 H12" fill="none" stroke="#4080ff" stroke-width="2" stroke-linecap="round"/><path d="M10 10.2 L26.7 18.2 L19.2 20.6 L16.3 27.4 Z" fill="#5088fc" stroke="#5088fc" stroke-width="0.6" stroke-linejoin="round"/></svg>
</div>
<div class="p" id="pK4" style="left:1600px;top:1023px;width:304px;height:42px">
  <div class="ring" style="left:20px;top:15px"></div>
  <div class="t ttl" style="left:39px;top:10.4px;letter-spacing:2px;font-weight:bold;color:#2a2a2a">XXXXXXXXXXX</div>
  <svg class="cur" style="left:255px;top:15.2px" width="28" height="29" viewBox="0 0 28 29"><rect x="5.7" y="5.9" width="14" height="14" rx="3" fill="rgba(64,128,255,0.28)"/><path d="M23 14.2 V8 A6 6 0 0 0 17 2 H8 A6 6 0 0 0 2 8 V17.4 A6 6 0 0 0 8 23.4 H12" fill="none" stroke="#4080ff" stroke-width="2" stroke-linecap="round"/><path d="M10 10.2 L26.7 18.2 L19.2 20.6 L16.3 27.4 Z" fill="#5088fc" stroke="#5088fc" stroke-width="0.6" stroke-linejoin="round"/></svg>
</div>
</body>
</html>
